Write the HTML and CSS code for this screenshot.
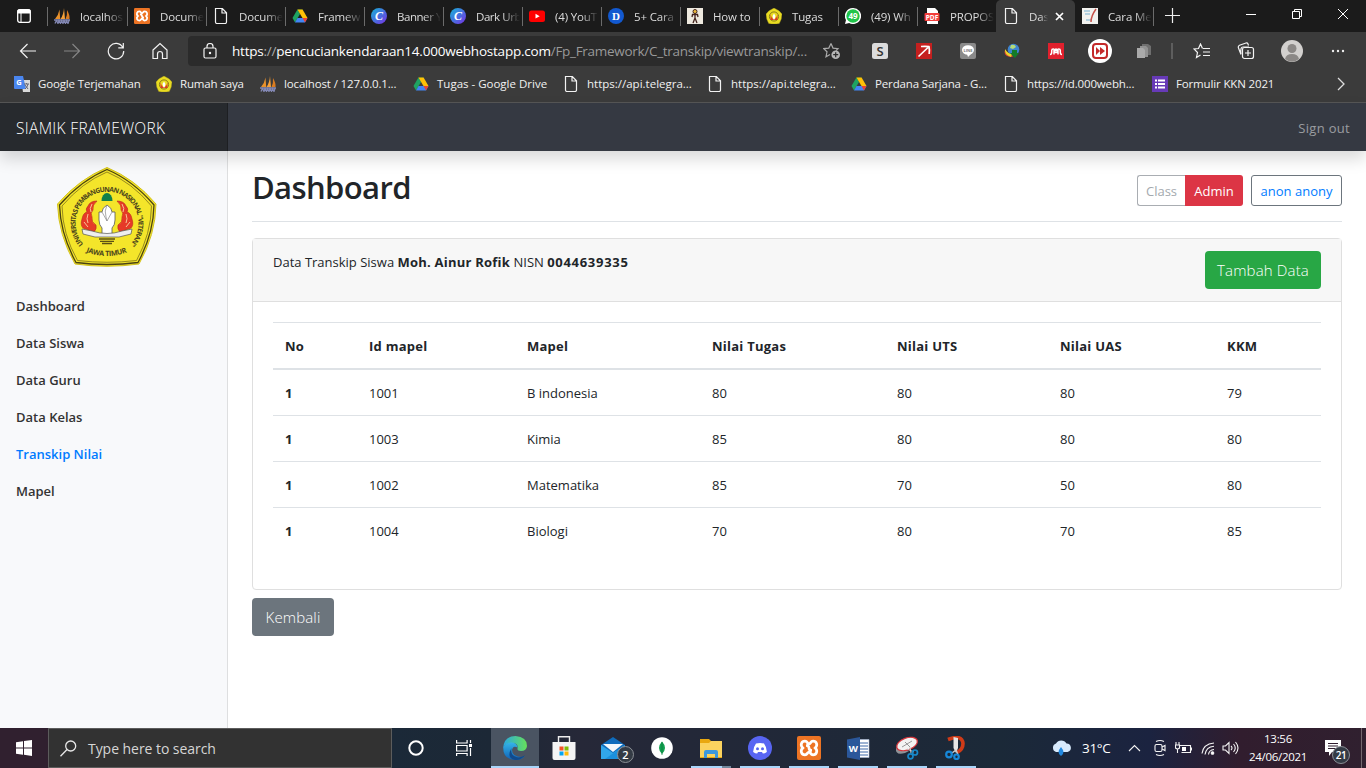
FILE: index.html
```html
<!DOCTYPE html>
<html lang="id">
<head>
<meta charset="utf-8">
<title>Dashboard</title>
<link rel="stylesheet" href="styles.css">
</head>
<body>
<svg class="defs" width="0" height="0">
  <symbol id="pma" viewBox="0 0 16 16"><path d="M5.500 1.500 6.200 11H1Q4.500 7 5.500 1.500Z" fill="#e8912b"/><path d="M10 0 11 11H6.500Q9.500 7 10 0Z" fill="#f6a13a"/><path d="M13 2Q16 7 15.500 11h-4Q13.500 7 13 2Z" fill="#d97c22"/><path d="M0 12h16M1 15.500l1.500-3 1.500 3 1-3 1.500 3 1-3 1.500 3 1-3 1.500 3 1-3 1.500 3 1-3" fill="none" stroke="#8388b4" stroke-width="1.300"/></symbol>
  <symbol id="xampp" viewBox="0 0 24 24"><rect width="24" height="24" rx="2" fill="#ed7424"/><path d="M8 5.200c-3.500 0-5.200 4-2.200 6.800-3 2.800-1.300 6.800 2.200 6.800 2.500 0 2.500-2.800 4-2.800s1.500 2.800 4 2.800c3.500 0 5.200-4 2.200-6.800 3-2.800 1.300-6.800-2.200-6.800-2.500 0-2.500 2.800-4 2.800S10.500 5.200 8 5.200ZM9 9.500q3 0 3 2.500t3 2.500" fill="none" stroke="#fff" stroke-width="2.700"/></symbol>
  <symbol id="doc" viewBox="0 0 16 16"><path d="M2.500.5h6.800l4.200 4.300v9.200q0 1.500-1.500 1.500H4q-1.500 0-1.500-1.500ZM9 .5V5h4.500" fill="none" stroke="#f2f2f2" stroke-width="1.200"/></symbol>
  <symbol id="drive" viewBox="0 0 16 16"><path d="M5.400 1.500h5.200L8 6Z" fill="#188038"/><path d="M5.400 1.500 8 6 3 14.500.5 10Z" fill="#1ea362"/><path d="M5.400 1.500h5.200L15.500 10h-5Z" fill="#ffc107"/><path d="M5.500 10h10L13 14.500H3Z" fill="#4285f4"/><path d="M10.500 10h5L13 14.500Z" fill="#ea4335"/></symbol>
  <symbol id="canva" viewBox="0 0 16 16"><defs><linearGradient id="cg" x1="0" y1="0" x2="1" y2="1"><stop stop-color="#13b5d8"/><stop offset="1" stop-color="#7a2ee6"/></linearGradient></defs><circle cx="8" cy="8" r="8" fill="url(#cg)"/><text x="8" y="12" text-anchor="middle" font-family="Liberation Serif" font-size="12" font-style="italic" font-weight="bold" fill="#fff">C</text></symbol>
  <symbol id="upn" viewBox="0 0 16 16"><path d="M8 0Q13 2 16 6q0 5-2.700 9.500-5.300 1-10.600 0Q0 11 0 6 3 2 8 0Z" fill="#e9dc22" stroke="#9b8e1b" stroke-width=".4"/><circle cx="8" cy="8.500" r="4.600" fill="none" stroke="#8b7c18"/><path d="M4.500 6q1 5 3.500 5t3.500-5v6h-7Z" fill="#d93a25"/><path d="m8 5.500 1.500 2.500-1 3.500h-1L6.500 8Z" fill="#fff"/></symbol>
</svg>
<div class="tabs">
  <div class="tab-menu"><svg width="14" height="14" viewBox="0 0 14 14"><rect x=".7" y=".7" width="12.600" height="12.600" rx="2" fill="none" stroke="#fff" stroke-width="1.300"/><path d="M1 1h12v3H1ZM4 4v9" fill="#fff" stroke="#fff"/></svg></div>
  <div class="tab first"><svg><use href="#pma"/></svg><span>localhos</span></div>
  <div class="tab"><svg><use href="#xampp"/></svg><span>Docume</span></div>
  <div class="tab"><svg><use href="#doc"/></svg><span>Docume</span></div>
  <div class="tab"><svg><use href="#drive"/></svg><span>Framew</span></div>
  <div class="tab"><svg><use href="#canva"/></svg><span class="tight">Banner Y</span></div>
  <div class="tab"><svg><use href="#canva"/></svg><span class="tight">Dark Urb</span></div>
  <div class="tab"><svg viewBox="0 0 16 16"><rect y="2.500" width="16" height="11.500" rx="2.500" fill="#f00"/><path d="m6.500 5.800 4.200 2.400-4.200 2.400Z" fill="#fff"/></svg><span>(4) YouT</span></div>
  <div class="tab"><svg viewBox="0 0 16 16"><circle cx="8" cy="8" r="8" fill="#1259d0"/><text x="8" y="12" text-anchor="middle" font-family="Liberation Serif" font-weight="bold" font-size="11" fill="#fff">D</text></svg><span>5+ Cara</span></div>
  <div class="tab"><svg viewBox="0 0 16 16"><path fill="#eee9df" d="M0 0h16v16H0Z"/><circle cx="8" cy="3.500" r="2" fill="#edba3d" stroke="#42231d"/><path d="M8 5.500V10M5 9l.5-2.500h5L11 9M8 10l-2 5M8 10l2 5" fill="none" stroke="#42231d" stroke-width="1.300"/></svg><span class="clear">How to</span></div>
  <div class="tab"><svg><use href="#upn"/></svg><span class="clear">Tugas</span></div>
  <div class="tab"><svg viewBox="0 0 16 16"><path d="M8 0a8 8 0 1 1-3.800 15L0 16l1-4A8 8 0 0 1 8 0Z" fill="#fff"/><circle cx="8" cy="8" r="6.700" fill="#20c54a"/><text x="8" y="11" text-anchor="middle" font-family="Open Sans" font-weight="bold" font-size="8" fill="#fff">49</text></svg><span>(49) Wh</span></div>
  <div class="tab"><svg viewBox="0 0 16 16"><path d="M3 0h8l3 3v13H3Z" fill="#fff"/><rect x=".5" y="5" width="15" height="8" rx="1" fill="#f33d3b"/><text x="8" y="11.500" text-anchor="middle" font-family="Open Sans" font-weight="bold" font-size="6.500" fill="#fff">PDF</text></svg><span>PROPOS</span></div>
  <div class="tab active"><svg><use href="#doc"/></svg><span>Das</span><svg class="close" viewBox="0 0 9 9"><path d="m1 1 7 7m0-7L1 8" stroke="#fff" stroke-width="1.700"/></svg></div>
  <div class="tab after"><svg viewBox="0 0 16 16"><path fill="#f2f2ef" d="M0 0h16v16H0Z"/><path d="M2 3h6M3 6h5M4 12h5" stroke="#75afd0"/><path d="M14 1Q9 8 9 14" fill="none" stroke="#c75149" stroke-width="1.500"/></svg><span>Cara Me</span></div>
  <div class="newtab"><svg width="15" height="15" viewBox="0 0 15 15"><path d="M7.500 0v15M0 7.500h15" stroke="#eee" stroke-width="1.200"/></svg></div>
  <div class="winbtns">
    <svg viewBox="0 0 10 10"><path d="M0 5.500h10" stroke="#fff"/></svg>
    <svg viewBox="0 0 10 10"><path d="M.5 2.500h7v7h-7ZM2.500 2.500v-2h7v7h-2" fill="none" stroke="#fff"/></svg>
    <svg viewBox="0 0 10 10"><path d="m0 0 10 10M10 0 0 10" stroke="#fff"/></svg>
  </div>
</div>
<div class="toolbar">
  <div class="cell"><svg width="18" height="18" viewBox="0 0 18 18" class="ln"><path d="M17 9H1.500M8.500 2 1.500 9l7 7"/></svg></div>
  <div class="cell dim"><svg width="18" height="18" viewBox="0 0 18 18" class="ln"><path d="M1 9h15.500M9.500 2l7 7-7 7"/></svg></div>
  <div class="cell"><svg width="18" height="18" viewBox="0 0 18 18" class="ln"><path d="M15.800 5.500A7.700 7.700 0 1 0 16.700 9M16.300 1v4.800h-5"/></svg></div>
  <div class="cell"><svg width="18" height="18" viewBox="0 0 18 18" class="ln"><path d="M2 8 9 1.500 16 8v8.500h-4.500V12a2.500 2.500 0 0 0-5 0v4.500H2Z"/></svg></div>
  <div class="address">
    <svg width="14" height="16" viewBox="0 0 14 16" class="ln"><rect x="1" y="5" width="12" height="10" rx="1.500"/><path d="M4 5V3.500a3 3 0 0 1 6 0V5"/><circle cx="7" cy="10" r=".6"/></svg>
    <div class="url"><b>https<i>://</i>pencuciankendaraan14.000webhostapp.com</b><span>/Fp_Framework/C_transkip/viewtranskip/...</span></div>
    <svg width="18" height="18" viewBox="0 0 18 18"><path d="m8 1.500 2 4.600 5 .5-2 2M7 12.500l-4 2.300 1-5L.8 6.600l5-.5L8 1.500" fill="none" stroke="#aaa" stroke-width="1.200"/><circle cx="12.700" cy="12.700" r="4.300" fill="#b5b5b5"/><path d="M12.700 10.200v5M10.200 12.700h5" stroke="#2b2b2b" stroke-width="1.200"/></svg>
  </div>
  <div class="ext">
    <div class="cell"><svg width="16" height="16" viewBox="0 0 16 16"><rect width="16" height="16" rx="2.500" fill="#dcdcdc"/><text x="8" y="13" text-anchor="middle" font-family="Open Sans" font-weight="600" font-size="13" fill="#333">S</text></svg></div>
    <div class="cell"><svg width="16" height="16" viewBox="0 0 16 16"><path fill="#c4201f" d="M0 0h16v16H0Z"/><path d="m2.500 13.500 9.500-9M5 3.500q5-.5 8 .2.700 3 .2 7.300" fill="none" stroke="#fff" stroke-width="1.700"/></svg></div>
    <div class="cell"><svg width="16" height="16" viewBox="0 0 16 16"><rect width="16" height="16" rx="2" fill="#8a8a8a"/><ellipse cx="8" cy="7" rx="6" ry="4.800" fill="#fff"/><path d="m7 11 1 3 4-4Z" fill="#fff"/><text x="8" y="8.600" text-anchor="middle" font-family="Open Sans" font-weight="bold" font-size="4" fill="#777">LINE</text></svg></div>
    <div class="cell"><svg width="16" height="16" viewBox="0 0 16 16"><circle cx="9.500" cy="6.500" r="5.800" fill="#3e84cf"/><path d="M7 2q4-1 5 2l-3 2-3-1Z" fill="#b5db78"/><path d="M1 7q-2 6 6 7l3-1Q3 11 1 7Z" fill="#e64c31"/><path d="M1 6q3 5 7 5l-1 3Q0 11 1 6Z" fill="#e9d72d"/><path d="M8 7v3H6l5 5 4-5h-2V7Z" fill="#137b28"/></svg></div>
    <div class="cell"><svg width="16" height="16" viewBox="0 0 16 16"><path fill="#e1202d" d="M0 0h16v16H0Z"/><path d="M2 11.500q1.700 0 1.700-2.300V7.500q0-1.500 1.500-1.500T6.800 8q.2 1.800 1.200 1.800T9.200 8q.1-2 1.600-2t1.500 1.500v1.700q0 2.300 1.700 2.300M6 7v4.500M10 7v4.500" fill="none" stroke="#fff" stroke-width="1.500"/><circle cx="8" cy="6.800" r="1.500" fill="#fff"/></svg></div>
    <div class="cell"><svg width="24" height="24" viewBox="0 0 24 24"><circle cx="12" cy="12" r="12" fill="#fff"/><rect x="5" y="5" width="14" height="14" rx="3" fill="none" stroke="#c32a2a" stroke-width="2"/><path d="m8 8 4 4-4 4Zm4 0 5 4-5 4Z" fill="#c32a2a"/></svg></div>
    <div class="cell"><svg width="16" height="16" viewBox="0 0 16 16"><path d="M6 1h6l3 2v9H6Z" fill="#6f6f6f"/><path d="M4 3h6l2 2v9H4Z" fill="#929292"/><path d="M1 5h6l2 2v8H1Z" fill="#aaa"/></svg></div>
  </div>
  <div class="sep"></div>
  <div class="cell"><svg width="18" height="16" viewBox="0 0 18 16" class="ln"><path d="M9.500 5.500 7.500 1 5.500 5.500 1 6l3.500 3.500-1 5 4-2.500M10 5.500h7M10 9h7M10 12.500h7"/></svg></div>
  <div class="cell"><svg width="18" height="18" viewBox="0 0 18 18" class="ln"><path d="M4 12.500 1.300 5.500Q1 4 2.500 3.300L9 1q1.500-.3 2 1l.5 1.500M4 12Q3 5 6 5h6"/><rect x="5.500" y="5.500" width="11" height="11" rx="2"/><path d="M11 8v6M8 11h6"/></svg></div>
  <div class="cell avatar"><svg width="22" height="22" viewBox="0 0 22 22"><circle cx="11" cy="11" r="11" fill="#d2d0ce"/><circle cx="11" cy="8.500" r="4.500" fill="#8b8886"/><path d="M4 19q1-5 7-5t7 5q-7 5.500-14 0Z" fill="#8b8886"/></svg></div>
  <div class="cell more"><svg width="14" height="4" viewBox="0 0 14 4" fill="#eee"><circle cx="2" cy="2" r="1.200"/><circle cx="7" cy="2" r="1.200"/><circle cx="12" cy="2" r="1.200"/></svg></div>
</div>
<div class="bookmarks">
  <div><svg viewBox="0 0 16 16"><path d="M7 4h9v12H9Z" fill="#d9d9d9"/><path d="M0 0h9l3 13H1q-1 0-1-1Z" fill="#4a86ef"/><text x="4.800" y="9" text-anchor="middle" font-family="Open Sans" font-weight="bold" font-size="7.500" fill="#fff">G</text><path d="M10 8h5m-2.500-1v1m1.500 0q-1 4-3 5m0-4 3 4" fill="none" stroke="#667"/></svg><span>Google Terjemahan</span></div>
  <div><svg><use href="#upn"/></svg><span>Rumah saya</span></div>
  <div><svg><use href="#pma"/></svg><span>localhost / 127.0.0.1...</span></div>
  <div><svg><use href="#drive"/></svg><span class="wide">Tugas - Google Drive</span></div>
  <div><svg><use href="#doc"/></svg><span class="wide">https://api.telegra...</span></div>
  <div><svg><use href="#doc"/></svg><span class="wide">https://api.telegra...</span></div>
  <div><svg><use href="#drive"/></svg><span>Perdana Sarjana - G...</span></div>
  <div><svg><use href="#doc"/></svg><span>https://id.000webh...</span></div>
  <div><svg viewBox="0 0 16 16"><path fill="#673ab7" d="M0 0h16v16H0Z"/><path d="M3 4.500h2M3 8h2M3 11.500h2M6 4.500h7M6 8h7M6 11.500h7" stroke="#fff" stroke-width="1.800"/></svg><span>Formulir KKN 2021</span></div>
  <svg class="chev" viewBox="0 0 8 14"><path d="m1 1 6 6-6 6" fill="none" stroke="#ddd" stroke-width="1.300"/></svg>
</div>
<div class="page">
  <header class="navbar"><a class="brand">SIAMIK FRAMEWORK</a><a class="signout">Sign out</a></header>
  <div class="body">
    <nav class="sidebar">
      <svg class="logo" width="100" height="100" viewBox="0 0 100 100">
        <defs><path id="arc" d="M26.500 77A31.500 31.500 0 1 1 73.500 77"/><path id="arc2" d="M29 85Q50 93 71 85"/></defs>
        <path d="M50 .5Q78 12 99 37 98.500 68 82 97 50 101.500 18 97 1.500 68 .5 37 22 12 50 .5Z" fill="#f4e52a" stroke="#d2c11e" stroke-width="1"/>
        <path d="M50 2.500Q76 13.500 97 38 96.500 67 81 95.500 50 99.500 19 95.500 3.500 67 2.500 38 24 13.500 50 2.500Z" fill="none" stroke="#4a4312" stroke-width="1.300"/>
        <path d="M50 5Q75 15.500 94.500 39 94 67 79.500 93.500 50 97 20.500 93.500 5.500 67 5 39 25 15.500 50 5Z" fill="none" stroke="#6d621a" stroke-width=".7"/>
        <text class="ring"><textPath href="#arc" textLength="145">UNIVERSITAS PEMBANGUNAN NASIONAL "VETERAN"</textPath></text>
        <text class="ring city"><textPath href="#arc2" textLength="42">JAWA TIMUR</textPath></text>
        <path d="M44.500 34a5.500 8 0 0 1 11 0Z" fill="#11804b"/>
        <path id="flame" d="M40 34q-7 0-9 5-3 3-1 6-4 1-5 7-2 6 1 9l11 4q3-3 2-7-5-3-4-8-2-4 1-7-1-5 4-9Z" fill="#e63a28" stroke="#b72a1c" stroke-width=".6"/>
        <path id="lick" d="M35 37q-3 5-1 8M31 47q-2 5 0 9M27 55l4 5" fill="none" stroke="#f9d4a3" stroke-width=".9"/>
        <use href="#flame" transform="matrix(-1 0 0 1 100 0)"/>
        <use href="#lick" transform="matrix(-1 0 0 1 100 0)"/>
        <path d="M50 38q-5 3-5 7l-3 0v8q0 5 3 8v7h10v-7q3-3 3-8v-8h-3q0-4-5-7Z" fill="#fff" stroke="#555" stroke-width=".8"/>
        <path d="M50 38q-3 6-1 12l1 4M45 45l5 9 5-9" fill="none" stroke="#888" stroke-width=".7"/>
        <path d="m25 62 10 2q15 5 30 0l10-2-1 5-12 3H38l-12-3Z" fill="#eee" stroke="#555" stroke-width=".7"/>
        <path d="M42 72h16M43 74.300h14M45 76.500h10" stroke="#5b5115" stroke-width="1.300"/>
      </svg>
      <a>Dashboard</a><a>Data Siswa</a><a>Data Guru</a><a>Data Kelas</a><a class="on">Transkip Nilai</a><a>Mapel</a>
    </nav>
    <main>
      <div class="title"><h1>Dashboard</h1>
        <div class="actions"><div class="group"><span class="cls">Class</span><span class="admin">Admin</span></div><span class="user">anon anony</span></div>
      </div>
      <section class="card">
        <div class="card-head"><p>Data Transkip Siswa <b class="nm">Moh. Ainur Rofik</b> NISN <b class="num">0044639335</b></p><a class="btn green">Tambah Data</a></div>
        <div class="card-body">
          <table>
            <colgroup><col class="c1"><col class="c2"><col class="c3"><col class="c3"><col class="c5"><col class="c6"><col></colgroup>
            <thead><tr><th>No</th><th>Id mapel</th><th>Mapel</th><th>Nilai Tugas</th><th>Nilai UTS</th><th>Nilai UAS</th><th>KKM</th></tr></thead>
            <tbody>
              <tr><th>1</th><td>1001</td><td>B indonesia</td><td>80</td><td>80</td><td>80</td><td>79</td></tr>
              <tr><th>1</th><td>1003</td><td>Kimia</td><td>85</td><td>80</td><td>80</td><td>80</td></tr>
              <tr><th>1</th><td>1002</td><td>Matematika</td><td>85</td><td>70</td><td>50</td><td>80</td></tr>
              <tr><th>1</th><td>1004</td><td>Biologi</td><td>70</td><td>80</td><td>70</td><td>85</td></tr>
            </tbody>
          </table>
        </div>
      </section>
      <a class="btn gray">Kembali</a>
    </main>
  </div>
</div>
<div class="taskbar">
  <div class="start"><svg width="16" height="16" viewBox="0 0 16 16" fill="#fff"><path d="M0 2.300 7 1.300V7.500H0ZM8 1.100 16 0v7.500H8ZM0 8.500h7v6.200l-7-1ZM8 8.500h8V16l-8-1.200Z"/></svg></div>
  <div class="search"><svg width="17" height="17" viewBox="0 0 17 17" fill="none" stroke="#e8e8e8" stroke-width="1.300"><circle cx="10.700" cy="6" r="5"/><path d="M7 9.500.5 16.300"/></svg><span>Type here to search</span></div>
  <div class="sys"><svg width="16" height="16" viewBox="0 0 16 16"><circle cx="8" cy="8" r="6.700" fill="none" stroke="#fff" stroke-width="2"/></svg></div>
  <div class="sys"><svg width="17" height="16" viewBox="0 0 17 16" fill="none" stroke="#fff" stroke-width="1.200"><path d="M.6 0v3h10.500V0M.6 5.500h10.500v5.500H.6ZM.6 16v-2.500h10.500V16M14.500 0v3M14.500 8v8"/><path d="M13 4h3v3h-3Z" fill="#fff" stroke="none"/></svg></div>
  <div class="apps">
    <div class="app edge"><svg viewBox="0 0 24 24"><defs><linearGradient id="e1"><stop stop-color="#2aa8e0"/><stop offset="1" stop-color="#66e05a"/></linearGradient><linearGradient id="e2" x2="0" y2="1"><stop stop-color="#35b5e8"/><stop offset="1" stop-color="#0f62b8"/></linearGradient></defs><path d="M.3 11Q1.500 0 12.500 0 24 .8 24 10q-.5 5-6 5-4 0-3.500-2.500Q15.500 7 9 7 3 7 .3 11Z" fill="url(#e1)"/><path d="M.2 11Q3 6 9 6.500q5 .5 5.500 5Q10 9 9 14q0 7 10 7 2 0 3-1-4 4.500-10.500 4Q0 23 .2 11Z" fill="url(#e2)"/><path d="M8.500 12Q7 20 14 21.300q4 .7 8-2Q18 24.500 12 24 3 22 8.500 12Z" fill="#114a8b"/></svg></div>
    <div class="app plain"><svg viewBox="0 0 24 24"><path d="M6.500 7V.8h11V7" fill="none" stroke="#eee" stroke-width="1.400"/><path d="M.5 6h23v16q0 2-2 2h-19q-2 0-2-2Z" fill="#f4f4f4"/><path d="M7.500 10.500h4v4h-4Z" fill="#f35325"/><path d="M12.500 10.500h4v4h-4Z" fill="#81bc06"/><path d="M7.500 15.500h4v4h-4Z" fill="#05a6f0"/><path d="M12.500 15.500h4v4h-4Z" fill="#ffba08"/></svg></div>
    <div class="app plain mail"><svg viewBox="0 0 24 24"><path d="M0 9 12 1l12 8v14H0Z" fill="#0f6cbd"/><path d="M2 8h20l-10 8Z" fill="#f3f8fc"/><path d="m0 9 12 8 12-8v14H0Z" fill="#31a6ea"/><path d="M24 9 4 23h20Z" fill="#1b90dd"/></svg><em>2</em></div>
    <div class="app plain"><svg viewBox="0 0 24 24"><circle cx="12" cy="12" r="10.800" fill="#fff"/><path d="M12 5.500q6 6.500 0 12.500-6-6 0-12.500Z" fill="#12a050"/><path d="M12 6v13" stroke="#08783a" stroke-width=".7"/></svg></div>
    <div class="app multi"><svg viewBox="0 0 24 24"><path d="M1 3h9l2 2h11v17H1Z" fill="#e9a810"/><path d="M1 7h9l2-2h11v16H1Z" fill="#fbd35f"/><path d="M5 22v-6q0-2 2-2h10q2 0 2 2v6h-3v-4H8v4Z" fill="#3c98dd"/></svg></div>
    <div class="app"><svg viewBox="0 0 24 24"><circle cx="12" cy="12" r="12" fill="#5865f2"/><path d="M8 7.500q4-1.200 8 0 3 4 2.800 8.500-2 1.500-4 1.600l-.8-1.600h-4l-.8 1.600q-2-.1-4-1.600Q5 11.500 8 7.500Z" fill="#fff"/><circle cx="9.500" cy="12.700" r="1.500" fill="#5865f2"/><circle cx="14.500" cy="12.700" r="1.500" fill="#5865f2"/></svg></div>
    <div class="app"><svg viewBox="0 0 24 24"><use href="#xampp"/></svg></div>
    <div class="app"><svg viewBox="0 0 24 24"><path d="M12 3.500h11v18H12Z" fill="#fff" stroke="#a9bbd8" stroke-width=".6"/><path d="M14 7h8M14 10h8M14 13h8M14 16h8M14 19h8" stroke="#3d68a9"/><path d="m1 3.500 13-2.500v23L1 21.500Z" fill="#2b579a"/><text x="7.400" y="16" text-anchor="middle" font-family="Open Sans" font-weight="bold" font-size="9.500" fill="#fff">W</text></svg></div>
    <div class="app"><svg viewBox="0 0 24 24"><path d="M1 12q-1 8 9 5l4-2Z" fill="#8f9398"/><ellipse cx="12" cy="8" rx="10.800" ry="6" transform="rotate(-20 12 8)" fill="#f3f3f3" stroke="#d8353b" stroke-width="1.200"/><path d="m7 11 10-6M10 6l5 5" stroke="#999"/><path d="m12 13 7 3M15 11l1 6" stroke="#ccc"/><circle cx="20" cy="16.500" r="2.500" fill="none" stroke="#1788c9" stroke-width="1.700"/><circle cx="15.500" cy="20.300" r="2.500" fill="none" stroke="#1788c9" stroke-width="1.700"/></svg></div>
    <div class="app"><svg viewBox="0 0 24 24"><path d="M4 3.500Q18-2 19 7.500q0 6-6 9" fill="none" stroke="#cf3b18" stroke-width="3.600"/><path d="M9.500 1v11l2.500 5 2-5V2Z" fill="#e6e6e6"/><path d="m12 14-4 3M12 14l2 5" stroke="#ccc" stroke-width="1.500"/><circle cx="5" cy="18.500" r="2.800" fill="none" stroke="#1788d9" stroke-width="2.200"/><circle cx="12.500" cy="20.800" r="2.300" fill="none" stroke="#1788d9" stroke-width="2.200"/></svg></div>
  </div>
  <div class="tray">
    <svg class="cloud" width="21" height="18" viewBox="0 0 21 18"><path d="M5 13a4.500 4.500 0 0 1 0-8.500 6 6 0 0 1 10.500 0 4.300 4.300 0 0 1 1 8.500Z" fill="#d8eafc"/><path d="M10 8q5 6 0 9-5-3 0-9Z" fill="#2188df"/></svg>
    <span class="temp">31°C</span>
    <svg class="t1" width="13" height="8" viewBox="0 0 13 8"><path d="m1 7 5.500-5.500L12 7"/></svg>
    <svg class="t2" width="12" height="18" viewBox="0 0 12 18"><path d="M2 2.500q4-2 8 0M2 15.500q4 2 8 0"/><rect x="1" y="5.500" width="7" height="7" rx="1.500"/><path d="m8 8 3-1.500v5L8 10"/></svg>
    <svg class="t3" width="17" height="12" viewBox="0 0 17 12"><path d="M4.500 3.500h11v7h-9M16.500 5.500v3M1 0v3M4 0v3M.5 3h4v3q-2 2-4 0ZM2.500 6.500V11"/><path d="M7 5h4v4H7Z" fill="#fff" stroke="none"/></svg>
    <svg class="t4" width="14" height="13" viewBox="0 0 14 13"><path d="M1 11.500Q2 2 13 1M4 12.500Q5 5 13 4.200M7.500 12.500Q8 8 13 7.500"/><circle cx="11.500" cy="11" r="1.300" fill="#fff"/></svg>
    <svg class="t5" width="17" height="14" viewBox="0 0 17 14"><path d="M1 5h2.500L7 1.500v11L3.500 9H1ZM9 5q2 2 0 4M11.500 3q3.500 4 0 8M13.500 1q5 6 0 12"/></svg>
    <div class="clock"><span>13:56</span><span>24/06/2021</span></div>
    <div class="notif"><svg width="17" height="17" viewBox="0 0 17 17"><path d="M0 0h16v12H7l-3 4v-4H0Z" fill="#fff" stroke="none"/><path d="M3 3.500h10M3 6h10M3 8.500h10" stroke="#311e30"/></svg><em>21</em></div>
    <div class="peek"></div>
  </div>
</div>
</body>
</html>
```
FILE: styles.css
```css
* { box-sizing: border-box; }
body { margin: 0; width: 1366px; height: 768px; overflow: hidden; display: flex; flex-direction: column; font-family: "Open Sans", "Noto Sans", sans-serif; font-size: 13px; color: #212529; background: #fff; }
svg { flex: none; display: block; }
.defs { position: absolute; }
.ln { fill: none; stroke: #f3f3f3; stroke-width: 1.2; }

.tabs { height: 32px; flex: none; background: #1b1b1b; display: flex; color: #dcdcdc; font-size: 11.5px; }
.tab-menu { width: 47px; padding: 9px 0 0 17px; }
.tab { width: 79px; height: 32px; display: flex; align-items: center; padding-left: 7px; position: relative; flex: none; }
.tab.first { width: 80px; }
.tab::before { content: ""; position: absolute; left: 0; top: 7px; width: 1px; height: 19px; background: #6b6b6b; }
.tab svg { width: 16px; height: 16px; margin-right: 10px; }
.tab span { width: 44px; overflow: hidden; white-space: nowrap; mask-image: linear-gradient(90deg, #000 60%, transparent 100%); letter-spacing: -.15px; }
.tab .tight { letter-spacing: -.45px; }
.tab .clear { mask-image: linear-gradient(90deg, #000 85%, transparent 110%); }
.tab.active { background: #3b3b3b; border-radius: 5px 5px 0 0; }
.tab.active::before, .tab.after::before { display: none; }
.tab.active span { width: 19px; }
.tab.active .close { width: 9px; height: 9px; margin: 1px 0 0 7px; }
.tab.after::after { content: ""; position: absolute; right: 0; top: 7px; width: 1px; height: 19px; background: #6b6b6b; }
.newtab { padding: 8px 0 0 11px; width: 87px; }
.winbtns { display: flex; padding: 9px 0 0 5px; gap: 36px; }
.winbtns svg { width: 10px; height: 10px; }

.toolbar { height: 38px; flex: none; background: #3b3b3b; display: flex; align-items: center; padding-left: 6px; }
.cell { width: 44px; display: flex; justify-content: center; flex: none; }
.dim { opacity: .4; }
.address { width: 664px; height: 30px; margin: 0 6px 0 6px; background: #2b2b2b; border-radius: 4px; display: flex; align-items: center; padding: 0 11px 0 15px; flex: none; }
.url { width: 592px; margin-left: 15px; font-size: 13.5px; white-space: nowrap; color: #999; letter-spacing: -.29px; }
.url b { font-weight: 400; color: #fff; letter-spacing: -.22px; }
.url i { font-style: normal; color: #aaa; }
.ext { display: flex; align-items: center; }
.sep { width: 2px; height: 16px; background: #5e5e5e; margin: 0 7px 0 5px; }
.avatar { margin-left: 2px; }
.more { margin-left: 2px; }

.bookmarks { height: 33px; flex: none; background: #3b3b3b; border-bottom: 1px solid #565656; display: flex; align-items: center; padding: 0 0 5px 14px; color: #f1f1f1; font-size: 11.5px; }
.bookmarks div { display: flex; align-items: center; white-space: nowrap; letter-spacing: -.15px; flex: none; width: 144px; }
.bookmarks .wide { letter-spacing: 0; }
.bookmarks div svg { width: 16px; height: 16px; margin-right: 8px; }
.bookmarks div:nth-child(1) { width: 142px; }
.bookmarks div:nth-child(2) { width: 104px; }
.bookmarks div:nth-child(3) { width: 153px; }
.bookmarks div:nth-child(4) { width: 150px; }
.bookmarks div:nth-child(7) { width: 152px; }
.bookmarks div:nth-child(8) { width: 149px; }
.bookmarks div:nth-child(9) { width: 185px; }
.chev { width: 8px; height: 14px; }

.page { flex: 1; display: flex; flex-direction: column; min-height: 0; }
.navbar { height: 48px; flex: none; background: #353942; display: flex; align-items: center; justify-content: space-between; box-shadow: 0 8px 16px rgba(0,0,0,.15); position: relative; z-index: 2; }
.brand { width: 228px; height: 48px; line-height: 50px; padding-left: 16px; background: #272a2e; box-shadow: inset -1px 0 0 rgba(0,0,0,.25); color: #fff; font-size: 15.5px; font-weight: 300; letter-spacing: .33px; }
.signout { color: rgba(255,255,255,.5); padding: 2px 16px 0 0; letter-spacing: .3px; }
.body { flex: 1; display: flex; min-height: 0; }
.sidebar { width: 228px; flex: none; background: #f8f9fb; border-right: 1px solid #dedfe0; display: flex; flex-direction: column; padding-top: 16px; }
.logo { margin: 0 0 21px 57px; }
.ring { font-family: "Open Sans", sans-serif; font-size: 6.8px; font-weight: 700; fill: #4b441c; }
.city { font-size: 7.2px; }
.sidebar a { height: 37px; line-height: 37px; padding-left: 16px; font-weight: 600; color: #333; }
.sidebar .on { color: #007bff; }
main { flex: 1; padding: 16px 24px 0; }
.title { height: 55px; border-bottom: 1px solid #dee2e6; display: flex; justify-content: space-between; margin-bottom: 16px; }
h1 { margin: 0; font-size: 31px; font-weight: 600; line-height: 40px; letter-spacing: -.6px; }
.actions { display: flex; gap: 8px; padding-top: 8px; }
.group { display: flex; }
.actions span { height: 31px; line-height: 31px; text-align: center; }
.cls { width: 48px; border: 1px solid #a9adb2; border-right: 0; border-radius: 3px 0 0 3px; color: #a4a9ae; }
.admin { width: 58px; background: #dc3545; color: #fff; border-radius: 0 3px 3px 0; }
.actions .admin { line-height: 32px; }
.user { width: 91px; border: 1px solid #6c757d; border-radius: 3px; color: #007bff; }
.actions .cls, .actions .user { line-height: 30px; }
.card { height: 352px; border: 1px solid #dfdfdf; border-radius: 4px; margin-bottom: 8px; }
.card-head { height: 63px; background: #f7f7f7; border-bottom: 1px solid #dfdfdf; display: flex; justify-content: space-between; padding: 12px 20px; }
.card-head p { margin: 0; line-height: 22px; }
.nm { letter-spacing: .23px; }
.num { letter-spacing: .7px; }
.btn { display: block; height: 38px; line-height: 39px; text-align: center; color: #fff; border-radius: 4px; font-size: 15px; font-weight: 300; letter-spacing: .15px; }
.green { width: 116px; background: #28a745; }
.gray { width: 82px; background: #6c757d; }
.card-body { padding: 20px 20px 0; }
table { width: 1048px; table-layout: fixed; border-collapse: collapse; }
.c1 { width: 84px; } .c2 { width: 158px; } .c3 { width: 185px; } .c5 { width: 163px; } .c6 { width: 167px; }
th, td { text-align: left; padding: 0 12px; height: 46px; border-top: 1px solid #dee2e6; }
th { font-weight: 700; letter-spacing: .25px; }
thead th { height: 46px; border-bottom: 2px solid #dee2e6; padding-top: 1px; }
tbody tr:first-child > * { height: 47px; padding-top: 1px; }

.taskbar { height: 40px; flex: none; display: flex; background: linear-gradient(90deg, #30202f 0, #30202f 48px, #1b2938 392px, #1c2836 490px, #262838 580px, #202838 800px, #1b2938 1000px, #1b2340 1150px, #311d2e 1240px, #30202f 1366px); color: #fff; }
.start { width: 48px; display: grid; place-items: center; }
.search { width: 344px; border: 1px solid #5c5c5c; background: #323232; display: flex; align-items: center; padding-left: 11px; gap: 11px; font-size: 14px; letter-spacing: -.05px; color: #d6d6d6; }
.sys { width: 48px; display: grid; place-items: center; }
.apps { display: flex; padding-left: 3px; gap: 1px; }
.app { width: 48px; height: 40px; display: flex; justify-content: center; padding-top: 8px; position: relative; }
.app svg { width: 24px; height: 24px; }
.app::after { content: ""; position: absolute; left: 4px; bottom: 0; width: 40px; height: 2px; background: #a9d5fa; }
.edge { background: #4a5462; }
.edge::after { left: 0; width: 48px; }
.plain::after { display: none; }
.multi::after { background: linear-gradient(90deg, #a9d5fa 31px, #71879c 31px); }
.taskbar em { position: absolute; font-style: normal; border-radius: 50%; background: #343b45; border: 1px solid #8b8f96; text-align: center; width: 17px; height: 17px; font-size: 11px; line-height: 15px; font-weight: 600; }
.mail em { left: 28px; top: 18px; }
.tray { margin-left: auto; width: 315px; display: flex; align-items: center; }
.tray svg:not(.cloud) { fill: none; stroke: #f4f4f4; stroke-width: 1.1; }
.temp { width: 37px; margin-left: 10px; font-size: 13.5px; letter-spacing: -.3px; }
.t1 { margin-left: 9px; } .t2 { margin-left: 13px; } .t3 { margin-left: 9px; } .t4 { margin-left: 9px; } .t5 { margin-left: 7px; }
.clock { width: 66px; margin-left: 6px; text-align: center; display: flex; flex-direction: column; font-size: 11.5px; line-height: 18px; letter-spacing: -.3px; white-space: nowrap; }
.notif { position: relative; margin-left: 14px; width: 36px; height: 40px; padding-top: 12px; }
.peek { width: 1px; height: 40px; background: #74686f; }
.taskbar .notif em { left: 7px; top: 18px; width: 18px; height: 18px; font-size: 10px; letter-spacing: -.4px; line-height: 17px; }
```
